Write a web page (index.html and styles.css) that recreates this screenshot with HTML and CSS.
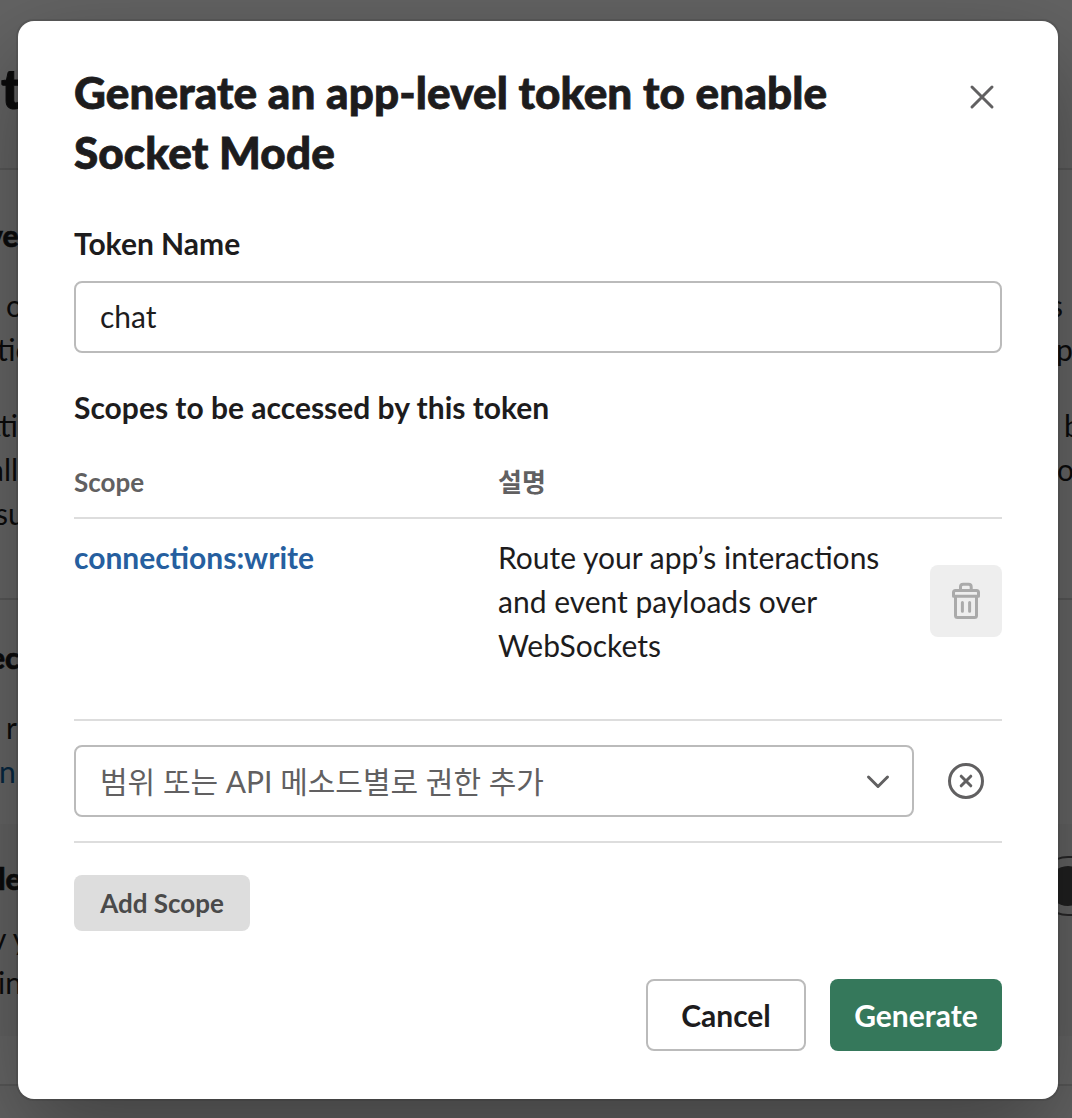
FILE: index.html
```html
<!DOCTYPE html>
<html lang="ko">
<head>
<meta charset="utf-8">
<title>Socket Mode</title>
<link rel="stylesheet" href="styles.css">
</head>
<body>
<div class="page" aria-hidden="true">
  <div class="page-title"><span class="frag-t">t</span></div>
  <section class="panel panel-intro">
    <div class="line heading"><span class="end">ve</span></div>
    <div class="line para"><span class="start-o">o</span><span class="right right-s">s</span></div>
    <div class="line"><span class="start-tio">tio</span><span class="right right-p">p</span></div>
    <div class="line para-gap"><span class="start-tti">tti</span><span class="right right-b">b</span></div>
    <div class="line"><span class="start-all">all</span><span class="right right-o">o</span></div>
    <div class="line"><span class="start-su">su</span></div>
  </section>
  <section class="panel panel-connect">
    <div class="line heading"><span class="start-ec">ec</span></div>
    <div class="line para"><span class="start-r">r</span></div>
    <div class="line link"><span class="start-n">n</span></div>
    <div class="feature">
      <div class="line heading"><span class="start-le">le</span><span class="toggle"><span class="knob"></span></span></div>
      <div class="line feature-text"><span class="start-vy">v y</span></div>
      <div class="line"><span class="start-in">in</span></div>
    </div>
  </section>
</div>
<div class="overlay">
  <div class="modal" role="dialog" aria-labelledby="title">
    <header class="modal-header">
      <h1 id="title" class="title">Generate an app-level token to enable Socket Mode</h1>
      <button class="icon-button close" aria-label="Close">
        <svg width="40" height="40" viewBox="0 0 40 40"><path d="M10 10L30 30M30 10L10 30"/></svg>
      </button>
    </header>
    <label class="label" for="name">Token Name</label>
    <input class="input" id="name" type="text" value="chat">
    <h2 class="label scopes-label">Scopes to be accessed by this token</h2>
    <div class="table">
      <div class="row head"><span>Scope</span><span>설명</span></div>
      <div class="row scope">
        <a class="scope-name">connections:write</a>
        <span>Route your app’s interactions and event payloads over WebSockets</span>
        <button class="delete" aria-label="Delete">
          <svg width="32" height="40" viewBox="0 0 32 40"><path d="M10.500 9.500V6Q10.500 3.300 13.200 3.300H18.500Q21.200 3.300 21.200 6V9.500M3.500 15.200V11.500Q3.500 9.500 5.500 9.500H26.500Q28.500 9.500 28.500 11.500V15.200ZM5.500 15.200V34.500Q5.500 36.500 7.500 36.500H24.500Q26.500 36.500 26.500 34.500V15.200M12.400 21.500V30.300M19.600 21.500V30.300"/></svg>
        </button>
      </div>
      <div class="picker">
        <div class="select">
          <span>범위 또는 API 메소드별로 권한 추가</span>
          <svg width="24" height="24" viewBox="0 0 24 24"><path d="M2.500 8L12 17.500L21.500 8"/></svg>
        </div>
        <button class="icon-button remove" aria-label="Remove">
          <svg width="40" height="40" viewBox="0 0 40 40"><circle cx="20" cy="20" r="16.500"/><path d="M15.200 15.200L24.800 24.800M24.800 15.200L15.200 24.800"/></svg>
        </button>
      </div>
    </div>
    <button class="add">Add Scope</button>
    <footer class="actions">
      <button class="button cancel">Cancel</button>
      <button class="button generate">Generate</button>
    </footer>
  </div>
</div>
</body>
</html>
```
FILE: styles.css
```css
* { box-sizing: border-box; }
body {
  margin: 0;
  height: 1118px;
  display: grid;
  overflow: hidden;
  color: #1d1c1d;
  font: 400 30px/44px Lato, "Noto Sans CJK KR", sans-serif;
  -webkit-font-smoothing: antialiased;
}
button, input { font: inherit; color: inherit; margin: 0; }
svg { display: block; fill: none; stroke: currentColor; stroke-linecap: round; stroke-linejoin: round; }

/* Page behind the dialog */
.page, .overlay { grid-area: 1 / 1; min-width: 0; }
.page { height: 1118px; overflow: hidden; background: #f8f8f8; }
.page-title { height: 168px; padding-top: 58px; font-size: 56px; font-weight: 900; line-height: 60px; -webkit-text-stroke: 1px currentColor; }
.frag-t { margin-left: 1px; }
.panel { background: #fff; border-top: 2px solid #ddd; }
.panel-intro { height: 430px; padding-top: 43px; }
.panel-connect { height: 488px; padding-top: 35px; border-bottom: 2px solid #ddd; }
.line { display: flex; height: 44px; white-space: nowrap; }
.heading { font-weight: 900; -webkit-text-stroke: .6px currentColor; }
.para { margin-top: 26px; }
.para-gap { margin-top: 32px; }
.link { color: #1264a3; }
.right { width: 14px; margin-left: auto; }
.end { margin-left: -13px; }
.start-o { margin-left: 6px; }
.start-tio { margin-left: -3px; }
.start-tti { margin-left: -10px; }
.start-all { margin-left: -11px; }
.start-su { margin-left: -5px; }
.start-ec { margin-left: -11px; }
.start-r { margin-left: 6px; }
.start-n { margin-left: -1px; }
.start-le { margin-left: -2px; }
.start-vy { margin-left: -9px; }
.start-in { margin-left: -2px; }
.right-s { text-indent: -8px; }
.right-p { text-indent: -2px; }
.right-b { text-indent: 6px; }
.right-o { text-indent: -1px; }
.feature { height: 212px; margin-top: 31px; padding-top: 32px; background: #f8f8f8; }
.feature-text { margin-top: 16px; }
.toggle { flex: none; width: 108px; height: 60px; margin: 0 -74px 0 auto; padding: 8px; border: 2px solid #616061; border-radius: 30px; }
.knob { display: block; width: 40px; height: 40px; border-radius: 50%; background: #505050; }

/* Dialog */
.overlay { padding: 21px 14px 19px 18px; background: rgba(0, 0, 0, .6); }
.modal {
  display: flex;
  flex-direction: column;
  height: 1078px;
  padding: 41px 56px 48px;
  border-radius: 16px;
  background: #fff;
  box-shadow: 0 0 0 2px rgba(29, 28, 29, .13), 0 36px 96px rgba(0, 0, 0, .35);
}
.modal-header { display: flex; justify-content: space-between; align-items: flex-start; height: 159px; }
.title { width: 800px; margin: 0; font-size: 44px; font-weight: 900; line-height: 60px; letter-spacing: .12px; -webkit-text-stroke: .8px currentColor; }
.icon-button { width: 40px; height: 40px; padding: 0; border: 0; background: none; color: #616061; }
.icon-button svg { stroke-width: 3; }
.close { margin: 15px 0 0; }
.label { height: 44px; margin: 0; font-size: 30px; font-weight: 700; line-height: 44px; }
.input { width: 100%; height: 72px; margin-top: 16px; padding: 0 24px 2px; border: 2px solid #bbb; border-radius: 8px; background: #fff; }
.scopes-label { margin-top: 32px; }
.row { display: grid; grid-template-columns: 424px 400px 1fr; border-bottom: 2px solid #ddd; }
.head { height: 90px; padding-top: 31px; color: #616061; font-size: 26px; font-weight: 700; }
.scope { height: 202px; padding-top: 16px; }
.scope-name { color: #265f9f; font-weight: 700; }
.delete { display: grid; place-items: center; justify-self: end; width: 72px; height: 72px; margin-top: 30px; padding: 0; border: 0; border-radius: 8px; background: #eee; color: #aaa; }
.delete svg { stroke-width: 3; }
.picker { display: flex; align-items: center; height: 122px; padding-right: 16px; justify-content: space-between; border-bottom: 2px solid #ddd; }
.select { display: flex; align-items: center; justify-content: space-between; width: 840px; height: 72px; padding: 0 22px 0 24px; border: 2px solid #bbb; border-radius: 8px; color: #616061; }
.select svg { stroke-width: 3; }
.add { align-self: flex-start; width: 176px; height: 56px; margin-top: 32px; padding: 0; border: 0; border-radius: 8px; background: #ddd; color: #4a4a4a; font-size: 26px; font-weight: 700; }
.actions { display: flex; justify-content: flex-end; gap: 24px; margin-top: 48px; }
.button { height: 72px; padding: 0; border: 0; border-radius: 8px; font-weight: 700; }
.cancel { width: 160px; border: 2px solid #bbb; background: #fff; }
.generate { width: 172px; background: #35785b; color: #fff; }
```
